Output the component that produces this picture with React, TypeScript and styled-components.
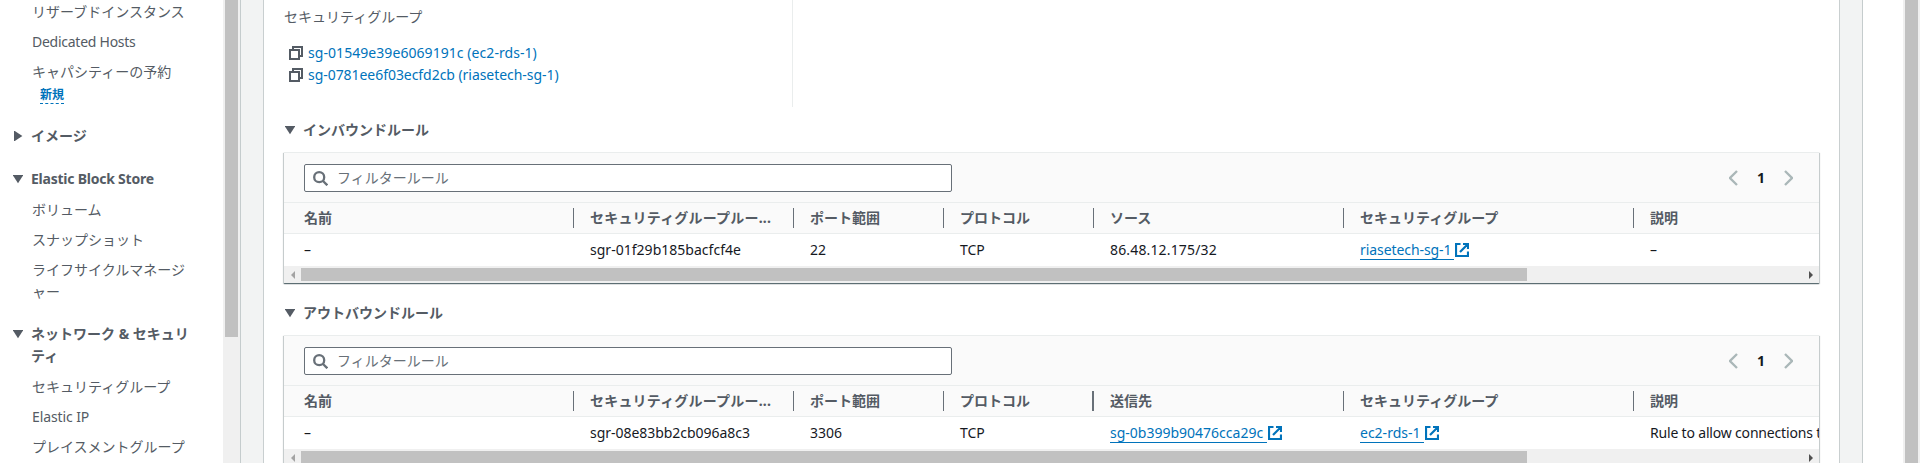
import React from "react";
import styled, { createGlobalStyle } from "styled-components";

const Global = createGlobalStyle`
  * { box-sizing: border-box; }
  body {
    margin: 0;
    overflow: hidden;
    background: #fff;
    color: #16191f;
    font: 14px/22px "Noto Sans", "Noto Sans CJK JP", sans-serif;
  }
`;

const Page = styled.div`
  display: flex;
  height: 463px;
  overflow: hidden;
`;

const Sidebar = styled.nav`
  display: flex;
  width: 241px;
  flex: none;
  border-right: 1px solid #c5cccd;
  color: #545b64;
`;

const NavContent = styled.div`
  flex: 1;
  min-width: 0;
  padding-top: 1px;
  white-space: nowrap;
`;

const VerticalTrack = styled.div`
  width: 17px;
  flex: none;
  padding: 0 2px;
  background: #f0f0f0;
`;

const VerticalThumb = styled.div<{ $height: number }>`
  height: ${(p) => p.$height}px;
  background: #c1c1c1;
`;

const NavItem = styled.div`
  margin: 0 0 8px 32px;
`;

const NavHeading = styled.div<{ $gap: number; $after: number }>`
  display: flex;
  margin: ${(p) => p.$gap}px 0 ${(p) => p.$after}px 13px;
  font-weight: 700;
`;

const Marker = styled.span`
  display: flex;
  align-items: center;
  width: 18px;
  height: 22px;
  flex: none;
`;

const NewBadge = styled.span`
  display: block;
  width: 24px;
  height: 21px;
  margin-left: 8px;
  border-bottom: 1px dashed #0073bb;
  color: #0073bb;
  font-size: 12px;
  line-height: 23px;
  font-weight: 700;
`;

const Label = styled.span<{ $ls?: number }>`
  letter-spacing: ${(p) => p.$ls ?? 0}px;
`;

const Workspace = styled.div`
  display: flex;
  flex: 1;
  min-width: 0;
  padding-left: 23px;
  background: #f2f3f3;
`;

const Card = styled.main`
  width: 1575px;
  flex: none;
  padding: 0 20px;
  background: #fff;
  box-shadow: 1px 0 0 #c9cfd0, -1px 0 0 #c9cfd0;
`;

const HelpPanel = styled.aside`
  display: flex;
  justify-content: flex-end;
  flex: 1;
  margin-left: 23px;
  border-left: 1px solid #c5cccd;
  background: #fff;
`;

const Details = styled.section`
  width: 509px;
  height: 107px;
  padding-top: 6px;
  border-right: 1px solid #eaeded;
  color: #545b64;
`;

const GroupList = styled.div`
  padding: 14px 0 0 5px;
`;

const GroupRow = styled.div`
  display: flex;
  align-items: center;
  gap: 5px;
  height: 22px;
  color: #0073bb;
  white-space: nowrap;
`;

const SectionTitle = styled.h3`
  display: flex;
  height: 22px;
  margin: 12px 0 11px;
  padding-left: 1px;
  color: #545b64;
  font-size: 14px;
  line-height: 22px;
`;

const RuleTable = styled.section`
  height: 131px;
  margin-bottom: 19px;
  border-top: 1px solid #eaeded;
  background: #fafafa;
  box-shadow: 0 1px 1px 0 rgba(0, 28, 36, 0.5), 1px 1px 1px 0 rgba(0, 28, 36, 0.15),
    -1px 1px 1px 0 rgba(0, 28, 36, 0.15);
`;

const Toolbar = styled.div`
  display: flex;
  justify-content: space-between;
  height: 49px;
  padding: 11px 26px 0 20px;
`;

const Search = styled.div`
  display: flex;
  align-items: center;
  gap: 9px;
  width: 648px;
  height: 28px;
  padding-left: 8px;
  border: 1px solid #687078;
  border-radius: 2px;
  background: #fff;
  color: #687078;
`;

const Pager = styled.div`
  display: flex;
  align-items: center;
  justify-content: space-between;
  width: 64px;
  height: 28px;
  font-weight: 700;
`;

const Row = styled.div`
  display: grid;
  grid-template-columns: 290px 220px 150px 150px 250px 290px 1fr;
  align-items: center;
  height: 32px;
  overflow: hidden;
  background: #fff;
`;

const HeadRow = styled(Row)`
  border-top: 1px solid #eaeded;
  border-bottom: 1px solid #eaeded;
  background: #fafafa;
  color: #545b64;
  font-weight: 700;
`;

const Cell = styled.div<{ $rule?: number }>`
  height: 20px;
  min-width: 0;
  line-height: 20px;
  padding-left: 16px;
  border-right: ${(p) => p.$rule ?? 0}px solid #687078;
  white-space: nowrap;

  &:first-child {
    padding-left: 20px;
  }
`;

const ExternalAnchor = styled.span`
  display: flex;
  align-items: flex-start;
  gap: 1px;
  color: #0073bb;

  svg {
    margin-top: 3px;
  }
`;

const Underlined = styled.span<{ $width: number; $ls: number }>`
  width: ${(p) => p.$width}px;
  height: 20px;
  border-bottom: 1px solid #0073bb;
  letter-spacing: ${(p) => p.$ls}px;
`;

const ScrollBar = styled.div`
  display: flex;
  align-items: center;
  height: 17px;
  background: #f0f0f0;
`;

const ScrollArrow = styled.span`
  display: flex;
  justify-content: center;
  width: 17px;
`;

const ScrollThumb = styled.div`
  width: 1226px;
  height: 13px;
  margin-right: auto;
  background: #c1c1c1;
`;

const Triangle = ({ right = false }: { right?: boolean }) => (
  <svg width="10" height="10" viewBox="0 0 10 10">
    <path d={right ? "M1 0v10h.8L9.4 5 1.8 0z" : "M0 1v.6L5 9.2l5-7.6V1z"} fill="#545b64" />
  </svg>
);

const CopyIcon = () => (
  <svg width="14" height="14" viewBox="0 0 14 14" fill="none" stroke="#545b64" strokeWidth="2">
    <path d="M1 4h9v9H1zM4 4V1h9v9h-3" />
  </svg>
);

const SearchIcon = () => (
  <svg width="15" height="15" viewBox="0 0 15 15" fill="none" stroke="#687078" strokeWidth="2.3">
    <circle cx="6.2" cy="6.2" r="5" />
    <path d="m10 10 4.3 4.3" />
  </svg>
);

const ExternalIcon = () => (
  <svg width="14" height="14" viewBox="0 0 14 14" fill="none" stroke="#0073bb" strokeWidth="2.2">
    <path d="M5.5 1H1v12h12V8.5M8 1h5v5M13 1 5 9" />
  </svg>
);

const Chevron = ({ right = false }: { right?: boolean }) => (
  <svg width="9" height="16" viewBox="0 0 9 16" fill="none" stroke="#aab7b8" strokeWidth="2.3">
    <path d={right ? "m1 1 7 7-7 7" : "M8 1 1 8l7 7"} />
  </svg>
);

const ScrollTriangle = ({ right = false }: { right?: boolean }) => (
  <svg width="4" height="8" viewBox="0 0 4 8">
    <path d={right ? "M0 0v8l4-4z" : "M4 0v8L0 4z"} fill={right ? "#505050" : "#a3a3a3"} />
  </svg>
);

type LinkValue = { text: string; width: number; ls: number };
type Value = string | LinkValue | { text: string; ls: number };

const External = ({ text, width, ls }: LinkValue) => (
  <ExternalAnchor>
    <Underlined $width={width} $ls={ls}>{text}</Underlined>
    <ExternalIcon />
  </ExternalAnchor>
);

const Rules = ({ target, values, activeRule }: { target: string; values: Value[]; activeRule?: number }) => {
  const heads = ["名前", "セキュリティグループルー...", "ポート範囲", "プロトコル", target, "セキュリティグループ", "説明"];
  return (
    <RuleTable>
      <Toolbar>
        <Search><SearchIcon />フィルタールール</Search>
        <Pager><Chevron />1<Chevron right /></Pager>
      </Toolbar>
      <HeadRow>
        {heads.map((h, i) => (
          <Cell key={h} $rule={i === 6 ? 0 : i === activeRule ? 2 : 1}>
            <Label $ls={i === 1 ? 0.2 : 0}>{h}</Label>
          </Cell>
        ))}
      </HeadRow>
      <Row>
        {values.map((v, i) => (
          <Cell key={i}>
            {typeof v === "string" ? v : "width" in v ? <External {...v} /> : <Label $ls={v.ls}>{v.text}</Label>}
          </Cell>
        ))}
      </Row>
      <ScrollBar>
        <ScrollArrow><ScrollTriangle /></ScrollArrow>
        <ScrollThumb />
        <ScrollArrow><ScrollTriangle right /></ScrollArrow>
      </ScrollBar>
    </RuleTable>
  );
};

export default function App() {
  return (
    <Page>
      <Global />
      <Sidebar>
        <NavContent>
          <NavItem>リザーブドインスタンス</NavItem>
          <NavItem><Label $ls={-0.26}>Dedicated Hosts</Label></NavItem>
          <NavItem>キャパシティーの予約<NewBadge>新規</NewBadge></NavItem>
          <NavHeading $gap={21} $after={21}><Marker><Triangle right /></Marker>イメージ</NavHeading>
          <NavHeading $gap={0} $after={9}><Marker><Triangle /></Marker><Label $ls={-0.23}>Elastic Block Store</Label></NavHeading>
          <NavItem>ボリューム</NavItem>
          <NavItem>スナップショット</NavItem>
          <NavItem>ライフサイクルマネージ<br />ャー</NavItem>
          <NavHeading $gap={20} $after={9}><Marker><Triangle /></Marker><span>ネットワーク &amp; セキュリ<br />ティ</span></NavHeading>
          <NavItem>セキュリティグループ</NavItem>
          <NavItem><Label $ls={-0.1}>Elastic IP</Label></NavItem>
          <NavItem>プレイスメントグループ</NavItem>
        </NavContent>
        <VerticalTrack><VerticalThumb $height={337} /></VerticalTrack>
      </Sidebar>
      <Workspace>
        <Card>
          <Details>
            セキュリティグループ
            <GroupList>
              <GroupRow><CopyIcon /><Label $ls={0.06}>sg-01549e39e6069191c (ec2-rds-1)</Label></GroupRow>
              <GroupRow><CopyIcon /><Label $ls={-0.05}>sg-0781ee6f03ecfd2cb (riasetech-sg-1)</Label></GroupRow>
            </GroupList>
          </Details>
          <SectionTitle><Marker><Triangle /></Marker>インバウンドルール</SectionTitle>
          <Rules
            target="ソース"
            values={[
              "–", { text: "sgr-01f29b185bacfcf4e", ls: 0.02 }, "22", "TCP", { text: "86.48.12.175/32", ls: 0.15 },
              { text: "riasetech-sg-1", width: 94, ls: -0.08 }, "–",
            ]}
          />
          <SectionTitle><Marker><Triangle /></Marker>アウトバウンドルール</SectionTitle>
          <Rules
            target="送信先"
            activeRule={3}
            values={[
              "–", { text: "sgr-08e83bb2cb096a8c3", ls: -0.04 }, "3306", "TCP",
              { text: "sg-0b399b90476cca29c", width: 157, ls: 0 },
              { text: "ec2-rds-1", width: 64, ls: 0 },
              { text: "Rule to allow connections to", ls: -0.18 },
            ]}
          />
        </Card>
        <HelpPanel><VerticalTrack><VerticalThumb $height={463} /></VerticalTrack></HelpPanel>
      </Workspace>
    </Page>
  );
}
